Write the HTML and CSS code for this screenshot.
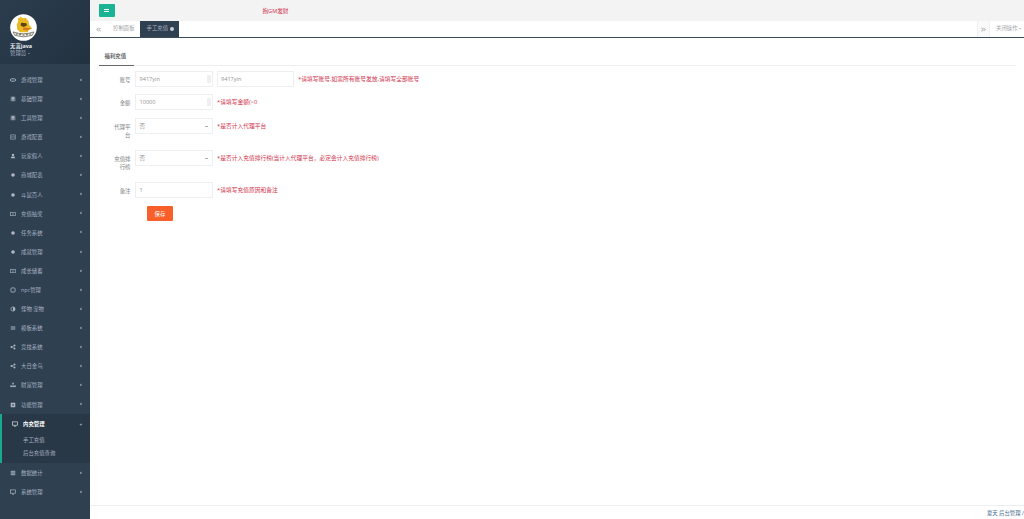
FILE: index.html
```html
<!DOCTYPE html>
<html lang="zh-CN">
<head>
<meta charset="utf-8">
<title>手工充值</title>
<link rel="stylesheet" href="styles.css">
</head>
<body>
<div class="app">
  <aside class="sidebar">
    <div class="profile">
      <svg class="avatar" viewBox="0 0 28 28" aria-hidden="true">
        <circle cx="14" cy="14" r="13.8" fill="#fff"/>
        <path d="M11 2.500l2 2 3-.5 3 3 1 4.500 3 3.500-3.500 1.500-1 2.500h-8l-3-3-.5-5 1.500-3.500-.5-3.500 1.500.5z" fill="#e9b824"/>
        <path d="M11.500 9l5.500.6.6 2.400-3.600 1.400-3-1.500z" fill="#5a4415"/>
        <path d="M14 14l8 .8-4 2.200-4.500-.4z" fill="#d9781e"/>
        <path d="M3.200 18.600q10.800 3.800 21.600 0l-1.800 3.600q-9 3-18 0z" fill="#f7f3e4" stroke="#4a4a4a" stroke-width=".7"/>
        <path d="M6 20.800h2M9.500 21.500h2M13 21.800h2M16.500 21.500h2M20 20.800h2" stroke="#4a4a4a" stroke-width="1"/>
      </svg>
      <div class="profile-name">无言java</div>
      <div class="profile-role">管理员 <span class="caret"></span></div>
    </div>
    <nav class="menu">
      <a class="item"><svg class="ico" viewBox="0 0 8 8"><rect x="0.5" y="2.400" width="7" height="3.200" rx="1.600" fill="none" stroke="#c5ced6" stroke-width="1.200"/></svg><span>游戏管理</span><i class="chev"></i></a>
      <a class="item"><svg class="ico" viewBox="0 0 8 8"><path d="M1 1h6v1H5v1h2v4H6V4H5v3H3V4H2v3H1V3h2V2H1z" fill="#c5ced6"/></svg><span>基础管理</span><i class="chev"></i></a>
      <a class="item"><svg class="ico" viewBox="0 0 8 8"><path d="M1 1h6v1H5v1h2v4H6V4H5v3H3V4H2v3H1V3h2V2H1z" fill="#c5ced6"/></svg><span>工具管理</span><i class="chev"></i></a>
      <a class="item"><svg class="ico" viewBox="0 0 8 8"><rect x="1" y="1.200" width="6" height="5.600" fill="none" stroke="#a9b4be"/><path d="M1 4h6" stroke="#a9b4be"/></svg><span>游戏配置</span><i class="chev"></i></a>
      <a class="item"><svg class="ico" viewBox="0 0 8 8"><circle cx="4" cy="2.500" r="1.600" fill="#c5ced6"/><path d="M1 7l1-2.500h4L7 7z" fill="#c5ced6"/></svg><span>玩家假人</span><i class="chev"></i></a>
      <a class="item"><svg class="ico" viewBox="0 0 8 8"><circle cx="4" cy="4" r="2.400" fill="#c5ced6"/></svg><span>商城配表</span><i class="chev"></i></a>
      <a class="item"><svg class="ico" viewBox="0 0 8 8"><circle cx="4" cy="4" r="2.400" fill="#c5ced6"/></svg><span>斗鼠百人</span><i class="chev"></i></a>
      <a class="item"><svg class="ico" viewBox="0 0 8 8"><rect x="0.800" y="1.800" width="6.400" height="4.400" fill="none" stroke="#a9b4be"/><path d="M4 2v4" stroke="#a9b4be"/></svg><span>充值抽奖</span><i class="chev"></i></a>
      <a class="item"><svg class="ico" viewBox="0 0 8 8"><circle cx="4" cy="4" r="2.400" fill="#c5ced6"/></svg><span>任务系统</span><i class="chev"></i></a>
      <a class="item"><svg class="ico" viewBox="0 0 8 8"><circle cx="4" cy="4" r="2.400" fill="#c5ced6"/></svg><span>成就管理</span><i class="chev"></i></a>
      <a class="item"><svg class="ico" viewBox="0 0 8 8"><rect x="0.800" y="1.800" width="6.400" height="4.400" fill="none" stroke="#a9b4be"/><path d="M4 2v4" stroke="#a9b4be"/></svg><span>成长储蓄</span><i class="chev"></i></a>
      <a class="item"><svg class="ico" viewBox="0 0 8 8"><rect x="1.200" y="1.200" width="5.600" height="5.600" rx="1.400" fill="none" stroke="#c5ced6" stroke-width="1.100"/></svg><span>npc管理</span><i class="chev"></i></a>
      <a class="item"><svg class="ico" viewBox="0 0 8 8"><circle cx="4" cy="4" r="2.800" fill="none" stroke="#c5ced6"/><path d="M4 1.200a2.800 2.800 0 0 1 0 5.600z" fill="#c5ced6"/></svg><span>怪物·宠物</span><i class="chev"></i></a>
      <a class="item"><svg class="ico" viewBox="0 0 8 8"><rect x="1" y="1.600" width="6" height="4.800" fill="#8d99a5"/><path d="M1 4h6" stroke="#2f4050" stroke-width=".5"/></svg><span>模板系统</span><i class="chev"></i></a>
      <a class="item"><svg class="ico" viewBox="0 0 8 8"><circle cx="2" cy="4" r="1.300" fill="#c5ced6"/><circle cx="6" cy="2" r="1.300" fill="#c5ced6"/><circle cx="6" cy="6" r="1.300" fill="#c5ced6"/><path d="M2 4l4-2M2 4l4 2" stroke="#c5ced6" stroke-width=".7"/></svg><span>竞技系统</span><i class="chev"></i></a>
      <a class="item"><svg class="ico" viewBox="0 0 8 8"><circle cx="2" cy="4" r="1.300" fill="#c5ced6"/><circle cx="6" cy="2" r="1.300" fill="#c5ced6"/><circle cx="6" cy="6" r="1.300" fill="#c5ced6"/><path d="M2 4l4-2M2 4l4 2" stroke="#c5ced6" stroke-width=".7"/></svg><span>大日金乌</span><i class="chev"></i></a>
      <a class="item"><svg class="ico" viewBox="0 0 8 8"><rect x="3" y="1" width="2" height="2.200" fill="#c5ced6"/><rect x="0.400" y="4.600" width="2.200" height="2.200" fill="#c5ced6"/><rect x="3" y="4.600" width="2.200" height="2.200" fill="#c5ced6"/><rect x="5.500" y="4.600" width="2.200" height="2.200" fill="#c5ced6"/></svg><span>财富管理</span><i class="chev"></i></a>
      <a class="item"><svg class="ico" viewBox="0 0 8 8"><rect x="1" y="1" width="6" height="6" fill="#c5ced6"/><rect x="3" y="3" width="2" height="2" fill="#2f4050"/></svg><span>功能管理</span><i class="chev"></i></a>
      <div class="group">
        <a class="item item-open"><svg class="ico ico-bright" viewBox="0 0 8 8"><rect x="0.700" y="1.200" width="6.600" height="4.400" fill="none" stroke="#fff" stroke-width=".9"/><path d="M2.500 7h3" stroke="#fff" stroke-width=".9"/></svg><span>内充管理</span><i class="chev chev-down"></i></a>
        <a class="sub">手工充值</a>
        <a class="sub">后台充值查询</a>
      </div>
      <a class="item"><svg class="ico" viewBox="0 0 8 8"><rect x="1" y="1" width="6" height="6" fill="#a9b4be"/><path d="M1 3h6M1 5h6" stroke="#2f4050" stroke-width=".5"/></svg><span>数据统计</span><i class="chev"></i></a>
      <a class="item"><svg class="ico" viewBox="0 0 8 8"><rect x="0.700" y="1.200" width="6.600" height="4.400" fill="none" stroke="#c5ced6" stroke-width=".9"/><path d="M2.500 7h3" stroke="#c5ced6" stroke-width=".9"/></svg><span>系统管理</span><i class="chev"></i></a>
    </nav>
  </aside>

  <main class="main">
    <header class="topbar">
      <button class="burger" type="button" aria-label="菜单"><span></span></button>
      <span class="notice">抱GM发财</span>
    </header>
    <div class="tabs">
      <span class="tab-nav"><svg class="dbl" viewBox="0 0 6 6"><path d="M3 1L1 3l2 2M5.500 1l-2 2 2 2" fill="none" stroke="#8a8f94" stroke-width="1"/></svg></span>
      <span class="tab">控制面板</span>
      <span class="tab tab-active">手工充值 <i class="tab-x"></i></span>
      <span class="tab-spacer"></span>
      <span class="tab-nav tab-nav-right"><svg class="dbl" viewBox="0 0 6 6"><path d="M.5 1l2 2-2 2M3 1l2 2-2 2" fill="none" stroke="#8a8f94" stroke-width="1"/></svg></span>
      <span class="tab-close">关闭操作 <span class="caret caret-dark"></span></span>
    </div>
    <section class="content">
      <div class="subtabs"><span class="subtab">福利充值</span></div>
      <form class="form">
        <div class="row row-1">
          <label class="lbl">账号</label>
          <div class="input input-number">9417yin<span class="spin"></span></div>
          <div class="input input-short">9417yin</div>
          <span class="hint hint-wide">*请填写账号,如需所有账号发放,请填写全部账号</span>
        </div>
        <div class="row row-2">
          <label class="lbl">金额</label>
          <div class="input input-number">10000<span class="spin"></span></div>
          <span class="hint">*请填写金额(&gt;0</span>
        </div>
        <div class="row row-3">
          <label class="lbl">代理平台</label>
          <div class="input input-select">否<i class="sel-caret"></i></div>
          <span class="hint">*是否计入代理平台</span>
        </div>
        <div class="row row-4">
          <label class="lbl">充值排行榜</label>
          <div class="input input-select">否<i class="sel-caret"></i></div>
          <span class="hint">*是否计入充值排行榜(当计入代理平台，必定会计入充值排行榜)</span>
        </div>
        <div class="row row-5">
          <label class="lbl">备注</label>
          <div class="input">1</div>
          <span class="hint">*请填写充值原因和备注</span>
        </div>
        <button class="save" type="button">保存</button>
      </form>
    </section>
    <footer class="footer">夏天 后台管理 /</footer>
  </main>
</div>
</body>
</html>
```

FILE: styles.css
```css
* { box-sizing: border-box; }
html, body { margin: 0; height: 100%; overflow: hidden; }
body {
  font-family: "Open Sans", "Noto Sans CJK SC", sans-serif;
  font-size: 5.4px;
  color: #7b7e80;
  background: #fff;
}
.app { display: flex; width: 1024px; height: 519px; }

/* sidebar */
.sidebar { width: 90px; flex: none; background: #2f4050; color: #a7b1c2; display: flex; flex-direction: column; }
.profile {
  height: 64px;
  padding: 13.5px 0 0 10px;
  background: linear-gradient(135deg, #2b3d4e 0%, #263646 60%, #233240 100%);
  line-height: 7px;
}
.avatar { width: 27px; height: 27px; display: block; margin-bottom: 2.5px; }
.profile-name { color: #eef1f4; font-weight: 700; }
.profile-role { color: #a7b1c2; }
.caret {
  display: inline-block; width: 0; height: 0; vertical-align: middle;
  border-left: 1.5px solid transparent; border-right: 1.5px solid transparent; border-top: 1.5px solid currentColor;
}
.caret-dark { color: #888; }
.menu { display: flex; flex-direction: column; padding-top: 6.4px; }
.item { height: 19.1px; flex: none; display: flex; align-items: center; padding-left: 10px; padding-right: 8px; color: #a7b1c2; }
.ico { width: 6px; height: 6px; flex: none; margin-right: 5px; opacity: .85; }
.item span { flex: 1; white-space: nowrap; }
.chev { width: 2.4px; height: 2.4px; border-left: .5px solid #8d99a5; border-bottom: .5px solid #8d99a5; transform: rotate(45deg); }
.chev-down { transform: rotate(-45deg); }
.group { background: #293846; border-left: 2px solid #19aa8d; padding-bottom: 3px; }
.item-open { color: #fff; font-weight: 700; padding-left: 10px; height: 19.5px; }
.ico-bright { margin-right: 5px; }
.sub { display: block; height: 13.3px; line-height: 13.3px; padding-left: 21px; color: #a7b1c2; }

/* main */
.main { flex: 1; min-width: 0; display: flex; flex-direction: column; }
.topbar { height: 21px; flex: none; background: #f3f3f4; display: flex; align-items: center; position: relative; padding-left: 9px; }
.burger { width: 15.5px; height: 13px; padding: 0; border: 0; border-radius: 1px; background: #1ab394; display: flex; align-items: center; justify-content: center; }
.burger span { display: block; width: 5px; height: 3.4px; border-top: 1px solid #fff; border-bottom: 1px solid #fff; }
.notice { margin-left: 148px; color: #d0324b; font-size: 5.6px; }
.tabs { height: 17px; flex: none; display: flex; align-items: stretch; border-bottom: 1.5px solid #3d4c59; background: #fff; line-height: 15.5px; color: #a3a6a8; }
.tab-nav { width: 17px; display: flex; align-items: center; justify-content: center; }
.dbl { width: 5px; height: 5px; margin-right: 1px; }
.tab { padding: 0 5.5px 0 6px; }
.tab-active { background: #2f4050; color: #a7b1c2; padding: 0 5.5px 0 6.5px; }
.tab-x { display: inline-block; width: 3.8px; height: 3.8px; margin-left: .5px; border-radius: 50%; background: #c5ced6; vertical-align: -0.5px; }
.tab-spacer { flex: 1; }
.tab-nav-right { width: 13px; background: #fafafa; border-left: 1px solid #f0f0f0; border-right: 1px solid #f0f0f0; }
.tab-close { width: 34px; padding-left: 6px; white-space: nowrap; }

.content { flex: 1; padding: 13px 8.5px 0; }
.subtabs { border-bottom: 1px solid #eceef0; height: 15px; }
.subtab { display: inline-block; height: 15px; line-height: 10px; padding: 0 6px; width: 35px; color: #676a6c; font-weight: 600; border-bottom: 1px solid #676a6c; }
.form { display: flex; flex-direction: column; }
.row { display: flex; align-items: flex-start; }
.row-1 { margin-top: 5px; height: 16px; }
.row-2 { margin-top: 7px; height: 16px; }
.row-3 { margin-top: 8px; height: 16px; }
.row-4 { margin-top: 16px; height: 16px; }
.row-5 { margin-top: 16px; height: 16px; }
.lbl { width: 21px; margin-left: 11px; margin-right: 4.5px; text-align: right; line-height: 8.8px; padding-top: 4.5px; flex: none; }
.input { width: 77.5px; height: 15.5px; border: 1px solid #eeeff0; line-height: 15px; padding-left: 3.5px; color: #909293; position: relative; flex: none; font-size: 5.6px; }
.input-short { margin-left: 4px; }
.input-number .spin { position: absolute; right: 1px; top: 2.5px; width: 4px; height: 8px; background: #eeeff0; border-radius: 1px; }
.sel-caret { position: absolute; right: 4px; top: 6.5px; width: 3px; height: 1px; background: #aaa; }
.hint { color: #d0324b; margin-left: 4.5px; line-height: 17px; white-space: nowrap; font-size: 5.75px; }
.hint-wide { margin-left: 4px; }
.save { width: 26px; height: 15px; margin: 8px 0 0 48.5px; border: 0; padding: 0; border-radius: 1px; background: #f85f2a; color: #fff; font: inherit; }
.footer { height: 14px; flex: none; border-top: 1px solid #eceef0; text-align: right; line-height: 14px; color: #3d6b8c; white-space: nowrap; }
```
